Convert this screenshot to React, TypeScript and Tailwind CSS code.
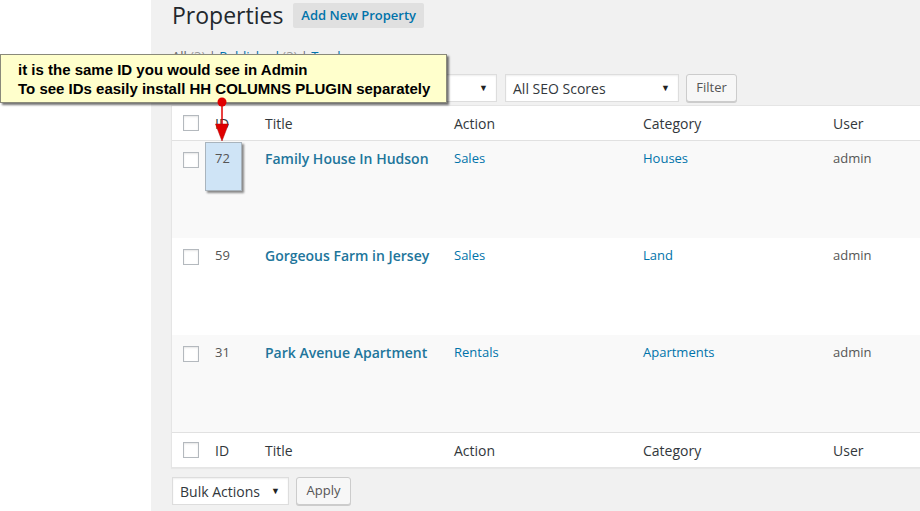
import React from 'react';

const rows = [
  { id: '72', title: 'Family House In Hudson', action: 'Sales', category: 'Houses', user: 'admin', alt: true, mark: true },
  { id: '59', title: 'Gorgeous Farm in Jersey', action: 'Sales', category: 'Land', user: 'admin', alt: false, mark: false },
  { id: '31', title: 'Park Avenue Apartment', action: 'Rentals', category: 'Apartments', user: 'admin', alt: true, mark: false },
];

const cols = 'grid grid-cols-[33px_50px_189px_189px_190px_1fr]';

function Checkbox() {
  return (
    <span className="block w-4 h-4 bg-white border border-[#b4b9be] shadow-[inset_0_1px_2px_rgba(0,0,0,0.1)]" />
  );
}

function Select({ label, width }: { label: string; width: string }) {
  return (
    <div
      className={`${width} h-[28px] flex items-center justify-between bg-white border border-[#ddd] shadow-[inset_0_1px_2px_rgba(0,0,0,0.07)] pl-[7px] pr-[8px] text-[14px] text-[#32373c]`}
    >
      <span>{label}</span>
      <span className="text-[9px] text-[#222]">▼</span>
    </div>
  );
}

function Button({ label, width }: { label: string; width: string }) {
  return (
    <div
      className={`${width} h-[28px] flex items-center justify-center bg-[#f7f7f7] border border-[#ccc] rounded-[3px] shadow-[0_1px_0_#ccc] text-[13px] text-[#555]`}
    >
      {label}
    </div>
  );
}

function HeadRow({ top }: { top?: boolean }) {
  return (
    <div className={`${cols} h-[35px] items-center bg-white text-[14px] text-[#32373c] ${top ? 'border-b' : 'border-t'} border-[#e1e1e1]`}>
      <div className="pl-[11px]">
        <Checkbox />
      </div>
      <div className="pl-[10px]">ID</div>
      <div className="pl-[10px]">Title</div>
      <div className="pl-[10px]">Action</div>
      <div className="pl-[10px]">Category</div>
      <div className="pl-[10px]">User</div>
    </div>
  );
}

export default function App() {
  return (
    <div
      className="relative w-[920px] h-[511px] overflow-hidden flex bg-[#f1f1f1]"
      style={{ fontFamily: '"Open Sans", "Noto Sans", sans-serif' }}
    >
      {/* admin menu area */}
      <div className="w-[151px] shrink-0 bg-white" />

      {/* main content */}
      <div className="flex-1 pl-[20px] flex flex-col">
        <div className="h-[31px] pl-[1px] flex items-center gap-[10px]">
          <h1 className="text-[23px] leading-none text-[#23282d] -mt-[1px]">Properties</h1>
          <div className="h-[25px] px-[8px] flex items-center bg-[#e0e0e0] rounded-[2px] text-[13px] font-semibold text-[#0073aa]">
            Add New Property
          </div>
        </div>

        <div className="mt-[16px] pl-[1px] h-[20px] text-[13px] text-[#666]">
          All <span className="text-[#999]">(3)</span> | <span className="text-[#0073aa]">Published</span>{' '}
          <span className="text-[#999]">(3)</span> | <span className="text-[#0073aa]">Trash</span>
        </div>

        <div className="mt-[7px] pl-[1px] flex items-center gap-[8px]">
          <Select label="All dates" width="w-[130px]" />
          <Select label="All categories" width="w-[187px]" />
          <Select label="All SEO Scores" width="w-[174px]" />
          <div className="ml-[-1px]">
            <Button label="Filter" width="w-[51px]" />
          </div>
        </div>

        {/* list table */}
        <div className="mt-[3px] w-[1000px] bg-white border border-[#e5e5e5] shadow-[0_1px_1px_rgba(0,0,0,0.04)]">
          <HeadRow top />
          {rows.map((r) => (
            <div key={r.id} className={`${cols} h-[97px] items-start ${r.alt ? 'bg-[#f9f9f9]' : 'bg-white'}`}>
              <div className="pl-[11px] pt-[11px]">
                <Checkbox />
              </div>
              <div className="relative pl-[10px] pt-[8px] text-[13px] leading-[19px] text-[#555]">
                {r.mark && (
                  <div className="absolute left-0 top-[1px] w-[37px] h-[49px] bg-[#cfe4f6] border border-[#a9b4bd] shadow-[2px_2px_2px_rgba(0,0,0,0.45)]" />
                )}
                <span className="relative">{r.id}</span>
              </div>
              <div className="pl-[10px] pt-[8px] text-[14px] leading-[19px] font-semibold text-[#21759b]">{r.title}</div>
              <div className="pl-[10px] pt-[8px] text-[13px] leading-[19px] text-[#0073aa]">{r.action}</div>
              <div className="pl-[10px] pt-[8px] text-[13px] leading-[19px] text-[#0073aa]">{r.category}</div>
              <div className="pl-[10px] pt-[8px] text-[13px] leading-[19px] text-[#555]">{r.user}</div>
            </div>
          ))}
          <HeadRow />
        </div>

        <div className="mt-[9px] pl-[1px] flex items-center gap-[7px]">
          <Select label="Bulk Actions" width="w-[117px]" />
          <Button label="Apply" width="w-[55px]" />
        </div>
      </div>

      {/* annotation callout */}
      <div
        className="absolute left-0 top-[54px] w-[447px] h-[49px] pl-[17px] pt-[5px] bg-[#ffffcc] border border-[#8a8a7a] shadow-[2px_2px_2px_rgba(0,0,0,0.55)] text-[15px] leading-[19px] font-bold text-black"
        style={{ fontFamily: '"Liberation Sans", Arial, sans-serif' }}
      >
        <div>it is the same ID you would see in Admin</div>
        <div>To see IDs easily install HH COLUMNS PLUGIN separately</div>
      </div>

      {/* arrow from callout to ID */}
      <svg className="absolute left-[212px] top-[96px]" width="20" height="48" viewBox="0 0 20 48">
        <line x1="10" y1="6" x2="10" y2="30" stroke="#e00000" strokeWidth="1.5" />
        <polygon points="3.5,28 16.5,28 10,45" fill="#e00000" stroke="#b00000" strokeWidth="0.5" />
        <circle cx="10" cy="6" r="4.5" fill="#e00000" />
      </svg>
    </div>
  );
}
